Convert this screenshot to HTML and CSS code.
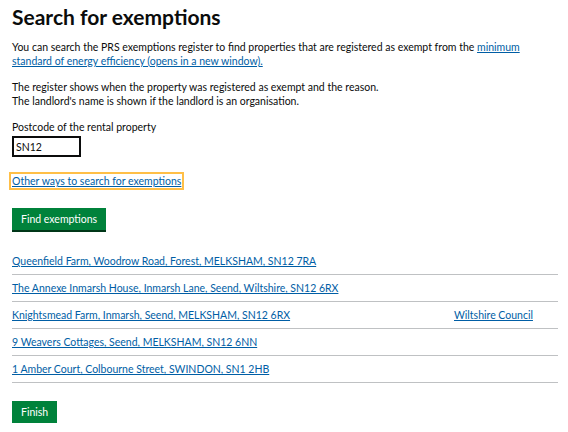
FILE: index.html
```html
<!DOCTYPE html>
<html lang="en">
<head>
<meta charset="utf-8">
<title>Search for exemptions</title>
<link rel="stylesheet" href="styles.css">
</head>
<body>
<main class="page">
  <h1 class="heading">Search for exemptions</h1>
  <p class="body">You can search the PRS exemptions register to find properties that are registered as exempt from the <a class="link" href="#">minimum standard of energy efficiency (opens in a new window).</a></p>
  <p class="body">The register shows when the property was registered as exempt and the reason.<br>The landlord's name is shown if the landlord is an organisation.</p>
  <div class="field">
    <label class="label" for="pc">Postcode of the rental property</label>
    <input class="input" id="pc" type="text" value="SN12">
  </div>
  <p class="other"><a class="link focus" href="#">Other ways to search for exemptions</a></p>
  <button class="button" type="button">Find exemptions</button>
  <div class="results">
    <div class="row"><a class="link" href="#">Queenfield Farm, Woodrow Road, Forest, MELKSHAM, SN12 7RA</a><span></span></div>
    <div class="row"><a class="link" href="#">The Annexe Inmarsh House, Inmarsh Lane, Seend, Wiltshire, SN12 6RX</a><span></span></div>
    <div class="row"><a class="link" href="#">Knightsmead Farm, Inmarsh, Seend, MELKSHAM, SN12 6RX</a><a class="link" href="#">Wiltshire Council</a></div>
    <div class="row"><a class="link" href="#">9 Weavers Cottages, Seend, MELKSHAM, SN12 6NN</a><span></span></div>
    <div class="row"><a class="link" href="#">1 Amber Court, Colbourne Street, SWINDON, SN1 2HB</a><span></span></div>
  </div>
  <button class="button" type="button">Finish</button>
</main>
</body>
</html>
```
FILE: styles.css
```css
* { box-sizing: border-box; }
body {
  margin: 0;
  font-family: Lato, "Liberation Sans", Arial, sans-serif;
  color: #0b0c0c;
  background: #fff;
}
.page {
  padding: 4px 10px 0 12px;
}
.heading {
  font-size: 21px;
  font-weight: 700;
  line-height: 26px;
  margin: 0 0 10px;
}
.body {
  font-size: 10.5px;
  line-height: 14px;
  margin: 0 0 12px;
}
.link {
  color: #005ea5;
  text-decoration: underline;
}
.field {
  display: flex;
  flex-direction: column;
  align-items: flex-start;
  margin-top: 6px;
}
.label {
  font-size: 10.5px;
  line-height: 14px;
  margin-bottom: 2px;
}
.input {
  width: 69px;
  height: 21px;
  border: 2px solid #0b0c0c;
  padding: 2px 2px;
  font: 10.5px Lato, "Liberation Sans", Arial, sans-serif;
  color: #0b0c0c;
  margin: 0;
}
.other {
  font-size: 10.5px;
  line-height: 14px;
  margin: 17px 0 20px;
}
.focus {
  outline: 2px solid #ffbf47;
  outline-offset: 1px;
}
.button {
  display: block;
  background: #00823b;
  color: #fff;
  border: 0;
  box-shadow: 0 2px 0 #003618;
  font: 10.5px Lato, "Liberation Sans", Arial, sans-serif;
  padding: 4px 9px 4px;
  line-height: 14px;
  margin: 0;
}
.results {
  margin: 18px 0 18px;
  width: 546px;
}
.row {
  display: grid;
  grid-template-columns: 442px 1fr;
  font-size: 10.5px;
  line-height: 14px;
  padding: 6px 0 6px;
  border-bottom: 1px solid #bfc1c3;
}
```
